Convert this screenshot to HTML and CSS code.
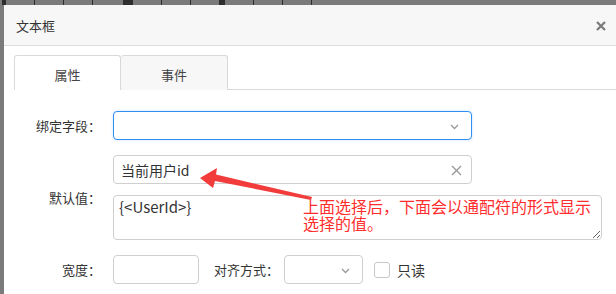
FILE: index.html
```html
<!DOCTYPE html>
<html lang="zh">
<head>
<meta charset="utf-8">
<link rel="stylesheet" href="styles.css">
</head>
<body>
<div class="toolbar">
  <span class="tb t1"></span><span class="tb t2"></span><span class="tb t3"></span><span class="tb t4"></span><span class="tb t5"></span><span class="tb t6"></span><span class="tb t7"></span><span class="tb t8"></span><span class="tb t9"></span><span class="tb t10"></span><span class="tb t11"></span>
</div>
<div class="stage">
  <div class="dialog">
    <div class="dlg-head">
      <span class="dlg-title">文本框</span>
      <svg class="dlg-close" width="10" height="10" viewBox="0 0 10 10"><path d="M1 1L9 9M9 1L1 9" stroke="#7a7a7a" stroke-width="2.2"/></svg>
    </div>
    <div class="dlg-body">
      <div class="tabs">
        <div class="tab active">属性</div>
        <div class="tab">事件</div>
      </div>
      <div class="form">
        <div class="row">
          <label class="lbl">绑定字段：</label>
          <div class="ctrl select wide focus">
            <svg class="chev" width="9" height="6" viewBox="0 0 9 6"><path d="M1 1L4.5 4.5L8 1" fill="none" stroke="#999" stroke-width="1.3"/></svg>
          </div>
        </div>
        <div class="row">
          <label class="lbl">默认值：</label>
          <div class="stack">
            <div class="ctrl wide with-clear">
              <span class="val">当前用户id</span>
              <svg class="clear" width="11" height="11" viewBox="0 0 11 11"><path d="M1 1L10 10M10 1L1 10" stroke="#999" stroke-width="1.4"/></svg>
            </div>
            <div class="area-wrap">
              <textarea class="area">{&lt;UserId&gt;}</textarea>
              <div class="note"><div>上面选择后，下面会以通配符的形式显示</div><div>选择的值。</div></div>
            </div>
          </div>
        </div>
        <div class="row">
          <label class="lbl">宽度：</label>
          <div class="ctrl small"></div>
          <label class="lbl2">对齐方式：</label>
          <div class="ctrl select mini">
            <svg class="chev" width="9" height="6" viewBox="0 0 9 6"><path d="M1 1L4.5 4.5L8 1" fill="none" stroke="#999" stroke-width="1.3"/></svg>
          </div>
          <span class="check"></span>
          <span class="check-lbl">只读</span>
        </div>
      </div>
    </div>
    <svg class="arrow" width="120" height="40" viewBox="0 0 120 40">
      <path d="M2 16 L19 6 L18 12.5 L114 35 L113 38 L17 19 L15 26 Z" fill="#f23b3b"/>
    </svg>
  </div>
</div>
</body>
</html>
```
FILE: styles.css
```css
* { box-sizing: border-box; }
html, body { margin: 0; padding: 0; }
body {
  width: 616px;
  height: 294px;
  overflow: hidden;
  background: #7b7b7b;
  font-family: "Noto Sans CJK SC", "Noto Sans", sans-serif;
  font-size: 13px;
  color: #333;
}
.toolbar {
  height: 5px;
  display: flex;
  gap: 0;
  position: relative;
}
.tb { display: block; height: 5px; background: #2e2e2e; width: 1px; margin-left: 28px; }
.t1 { margin-left: 2px; width: 4px; }
.t5 { width: 10px; margin-left: 30px; }
.t8 { width: 6px; }
.stage { padding-left: 4px; }
.dialog {
  position: relative;
  background: #fff;
  height: 289px;
}
.dlg-head {
  height: 41px;
  background: #f7f7f7;
  border-bottom: 1px solid #dcdcdc;
  display: flex;
  align-items: center;
  justify-content: space-between;
  padding: 0 10px 0 12px;
}
.dlg-title { font-size: 13px; color: #333; }
.dlg-close { margin-top: 1px; }
.dlg-body { padding: 9px 0 0 10px; }
.tabs {
  display: flex;
  border-bottom: 1px solid #d9d9d9;
  height: 35px;
}
.tab {
  width: 107px;
  height: 35px;
  display: flex;
  align-items: center;
  justify-content: center;
  border: 1px solid #d9d9d9;
  border-bottom: none;
  border-radius: 3px 3px 0 0;
  background: #f7f7f7;
  color: #444;
  font-size: 13px;
  padding-top: 2px;
}
.tab + .tab { border-left: none; }
.tab.active { background: #fff; height: 35px; margin-bottom: -1px; }
.form { padding-top: 21px; display: flex; flex-direction: column; gap: 15px; }
.row { display: flex; align-items: center; }
.lbl { width: 87px; text-align: right; margin-right: 12px; color: #333; flex: none; }
.stack { display: flex; flex-direction: column; gap: 11px; }
.ctrl {
  height: 29px;
  border: 1px solid #cfcfcf;
  border-radius: 4px;
  background: #fff;
  position: relative;
  display: flex;
  align-items: center;
  flex: none;
}
.wide { width: 359px; }
.focus { border-color: #2d8ff0; box-shadow: 0 0 3px rgba(45,143,240,.25); }
.chev { position: absolute; right: 12px; top: 12px; }
.val { font-size: 14px; color: #333; padding-left: 7px; }
.clear { position: absolute; right: 9px; top: 9px; }
.area-wrap { position: relative; width: 489px; height: 45px; }
.area {
  display: block;
  width: 489px;
  height: 45px;
  border: 1px solid #cfcfcf;
  border-radius: 4px;
  font-family: "Noto Sans CJK SC", "Noto Sans", sans-serif;
  font-size: 15px;
  color: #333;
  padding: 2px 5px;
  line-height: 18px;
  resize: both;
  outline: none;
}
.note {
  position: absolute;
  left: 190px;
  top: 3px;
  color: #ff2d2d;
  font-size: 16px;
  line-height: 17px;
  pointer-events: none;
  display: flex;
  flex-direction: column;
  gap: 0;
}
.small { width: 86px; }
.lbl2 { margin-left: 15px; margin-right: 5px; }
.mini { width: 79px; }
.check {
  width: 16px; height: 16px;
  border: 1px solid #c8c8c8;
  border-radius: 3px;
  margin-left: 11px;
  background: #fff;
}
.check-lbl { margin-left: 7px; font-size: 14px; color: #333; }
.arrow { position: absolute; left: 194px; top: 157px; }
```
